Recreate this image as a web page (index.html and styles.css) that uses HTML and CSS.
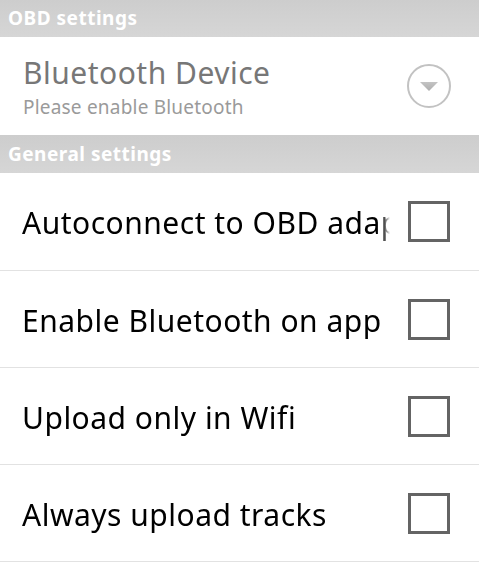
FILE: index.html
```html
<!DOCTYPE html>
<html>
<head>
<meta charset="utf-8">
<link rel="stylesheet" href="styles.css">
</head>
<body>
<div class="screen">
  <div class="cat cat-first">OBD settings</div>
  <div class="pref pref-disabled">
    <div class="pref-text">
      <div class="pref-title">Bluetooth Device</div>
      <div class="pref-summary">Please enable Bluetooth</div>
    </div>
    <div class="pref-widget">
      <svg class="spinner" width="46" height="46" viewBox="0 0 46 46">
        <defs>
          <linearGradient id="tri" x1="0" y1="0" x2="0" y2="1">
            <stop offset="0" stop-color="#c4c4c4"/>
            <stop offset="1" stop-color="#aeaeae"/>
          </linearGradient>
        </defs>
        <circle cx="23" cy="23" r="21" fill="none" stroke="#c2c2c2" stroke-width="2"/>
        <path d="M14 19 L32 19 L23 28 Z" fill="url(#tri)"/>
      </svg>
    </div>
  </div>
  <div class="cat">General settings</div>
  <div class="row row-first">
    <div class="row-text">Autoconnect to OBD adapter</div>
    <div class="check"></div>
  </div>
  <div class="row">
    <div class="row-text">Enable Bluetooth on app start</div>
    <div class="check"></div>
  </div>
  <div class="row">
    <div class="row-text">Upload only in Wifi</div>
    <div class="check"></div>
  </div>
  <div class="row">
    <div class="row-text">Always upload tracks</div>
    <div class="check"></div>
  </div>
</div>
</body>
</html>
```

FILE: styles.css
```css
html, body {
  margin: 0;
  padding: 0;
  background: #ffffff;
  overflow: hidden;
}

.screen {
  width: 479px;
  height: 576px;
  display: flex;
  flex-direction: column;
  font-family: "Noto Sans", "Open Sans", "DejaVu Sans", sans-serif;
}

.cat {
  height: 38px;
  flex: none;
  box-sizing: border-box;
  padding-left: 8px;
  padding-bottom: 1px;
  display: flex;
  align-items: center;
  background: linear-gradient(#cdcdcd, #d6d6d6);
  color: #ffffff;
  font-weight: 700;
  font-size: 19px;
  letter-spacing: 0.5px;
}

.cat-first {
  height: 37px;
}

.pref {
  height: 98px;
  flex: none;
  display: flex;
  align-items: center;
  padding-left: 23px;
  padding-right: 27px;
}

.pref-text {
  flex: 1;
  min-width: 0;
  padding-top: 3px;
}

.pref-title {
  font-size: 30px;
  line-height: 36px;
  letter-spacing: 0.5px;
  color: #777777;
}

.pref-summary {
  font-size: 19px;
  line-height: 26px;
  margin-top: 3px;
  letter-spacing: 0.2px;
  color: #9a9a9a;
}

.pref-widget {
  display: flex;
  align-items: center;
}

.row {
  height: 97px;
  flex: none;
  box-sizing: border-box;
  border-bottom: 1px solid #e2e2e2;
  display: flex;
  align-items: center;
  padding-left: 22px;
  padding-right: 29px;
}

.row-first {
  height: 98px;
}

.row-text {
  flex: 1;
  min-width: 0;
  font-size: 30px;
  line-height: 40px;
  letter-spacing: 0.5px;
  padding-top: 3px;
  color: #000000;
  white-space: nowrap;
  overflow: hidden;
  margin-right: 18px;
  -webkit-mask-image: linear-gradient(to right, #000 calc(100% - 8px), transparent);
  mask-image: linear-gradient(to right, #000 calc(100% - 8px), transparent);
}

.check {
  width: 42px;
  height: 41px;
  box-sizing: border-box;
  border: 3px solid #646464;
  flex: none;
}
```
